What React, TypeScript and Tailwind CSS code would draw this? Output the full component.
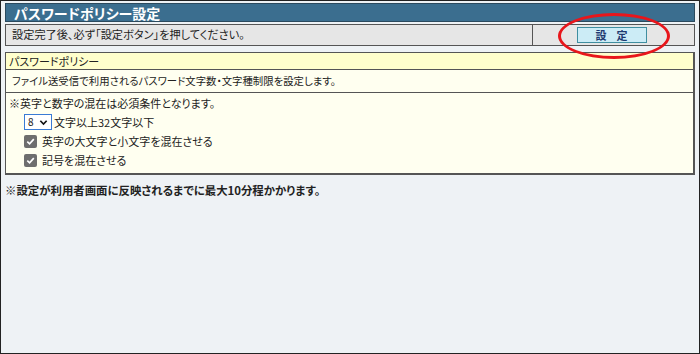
import React from "react";

const font = { fontFamily: '"Noto Sans CJK JP", "Noto Sans", sans-serif' };

function Check() {
  return (
    <span className="inline-flex h-[13px] w-[13px] items-center justify-center rounded-[2px] bg-[#6e6e6e]">
      <svg viewBox="0 0 12 12" className="h-[11px] w-[11px]">
        <path d="M2.5 6.2 L5 8.6 L9.6 3.4" fill="none" stroke="#fff" strokeWidth="1.8" />
      </svg>
    </span>
  );
}

export default function App() {
  return (
    <div
      className="relative h-[354px] w-[700px] border border-[#222] bg-[#eef2f5] px-[4px] pt-[2px] text-[11px] leading-none text-[#222] [font-feature-settings:'palt']"
      style={font}
    >
      <div className="flex h-[19px] items-center border border-[#2b4a5e] bg-[#3b6e8f] pl-[8px] text-[14px] font-bold text-white">
        パスワードポリシー設定
      </div>
      <div className="mt-[2px] flex h-[22px] border border-[#555] bg-[#e6e6e6]">
        <div className="flex flex-1 items-center pl-[6px] text-[11.2px]">設定完了後、必ず「設定ボタン」を押してください。</div>
        <div className="flex w-[162px] items-center justify-center border-l border-[#555]">
          <button className="ml-[-4px] flex h-[16px] w-[70px] items-center justify-center gap-[10px] border border-[#3f8ea0] bg-[#ccecf6] text-[11px] font-bold text-[#1e3a70]">
            <span>設</span>
            <span>定</span>
          </button>
        </div>
      </div>

      <div className="mt-[6px] border-l border-t border-[#555] border-r-2 border-b-2 border-r-[#555] border-b-[#555]">
        <div className="flex h-[17px] items-center bg-[#ffffcc] pl-[3px] border-b border-[#555]">パスワードポリシー</div>
        <div className="flex h-[23px] items-center bg-[#fffff0] pl-[6px] text-[10.4px] border-b border-[#555]">
          ファイル送受信で利用されるパスワード文字数・文字種制限を設定します。
        </div>
        <div className="flex h-[80px] flex-col bg-[#fffff0] pl-[3px] pt-[5px]">
          <div>※英字と数字の混在は必須条件となります。</div>
          <div className="mt-[5px] flex items-center pl-[15px]">
            <span className="flex h-[16px] w-[28px] items-center justify-between border border-[#3a7bd5] bg-white px-[3px] text-[10px]">
              <span>8</span>
              <svg viewBox="0 0 10 10" className="h-[9px] w-[9px]">
                <path d="M1.5 3 L5 6.8 L8.5 3" fill="none" stroke="#111" strokeWidth="1.8" />
              </svg>
            </span>
            <span className="ml-[2px]">文字以上32文字以下</span>
          </div>
          <div className="mt-[5px] flex items-center gap-[5px] pl-[15px]">
            <Check />
            <span>英字の大文字と小文字を混在させる</span>
          </div>
          <div className="mt-[6px] flex items-center gap-[5px] pl-[15px]">
            <Check />
            <span>記号を混在させる</span>
          </div>
        </div>
      </div>

      <div className="mt-[10px] text-[11.4px] font-bold">※設定が利用者画面に反映されるまでに最大10分程かかります。</div>

      <div className="pointer-events-none absolute left-[557px] top-[12px] h-[46px] w-[112px] rounded-[50%] border-[3px] border-[#e8161b]" />
    </div>
  );
}
